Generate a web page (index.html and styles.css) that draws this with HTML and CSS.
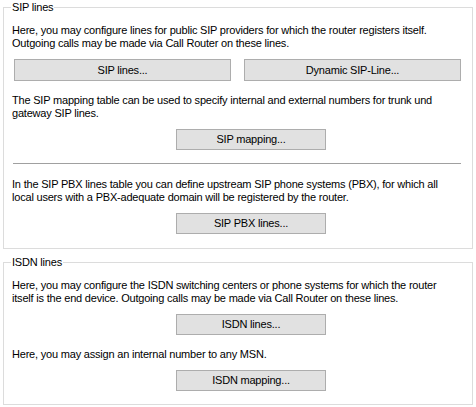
FILE: index.html
```html
<!DOCTYPE html>
<html lang="en">
<head>
    <meta charset="UTF-8">
    <title>Lines</title>
    <link rel="stylesheet" href="styles.css">
</head>
<body>
    <fieldset class="group sip">
        <legend>SIP lines</legend>
        <p class="text first">Here, you may configure lines for public SIP providers for which the router registers itself.<br>Outgoing calls may be made via Call Router on these lines.</p>
        <div class="row pair">
            <button class="btn wide">SIP lines...</button>
            <button class="btn wide">Dynamic SIP-Line...</button>
        </div>
        <p class="text">The SIP mapping table can be used to specify internal and external numbers for trunk und<br>gateway SIP lines.</p>
        <div class="row">
            <button class="btn">SIP mapping...</button>
        </div>
        <hr class="sep">
        <p class="text after-sep">In the SIP PBX lines table you can define upstream SIP phone systems (PBX), for which all<br>local users with a PBX-adequate domain will be registered by the router.</p>
        <div class="row">
            <button class="btn">SIP PBX lines...</button>
        </div>
    </fieldset>

    <fieldset class="group isdn">
        <legend>ISDN lines</legend>
        <p class="text first">Here, you may configure the ISDN switching centers or phone systems for which the router<br>itself is the end device. Outgoing calls may be made via Call Router on these lines.</p>
        <div class="row">
            <button class="btn">ISDN lines...</button>
        </div>
        <p class="text">Here, you may assign an internal number to any MSN.</p>
        <div class="row">
            <button class="btn">ISDN mapping...</button>
        </div>
    </fieldset>
</body>
</html>
```

FILE: styles.css
```css
*{
    margin:0;
    padding:0;
    box-sizing:border-box;
}

body{
    width:476px;
    height:407px;
    background:#fff;
    color:#000;
    font-family:"Liberation Sans", Arial, sans-serif;
    font-size:11px;
    line-height:13px;
    letter-spacing:-0.2px;
    padding-top:1px;
}

.group{
    margin:0 3px;
    border:1px solid #dcdcdc;
    padding:0 9px 0 8px;
}

.group legend{
    padding:0 1px;
    margin-left:-1px;
    line-height:13px;
}

.sip{
    height:248px;
}

.isdn{
    margin-top:7px;
    height:149px;
}

.text{
    margin-top:13px;
    white-space:nowrap;
}

.text.first{
    margin-top:10px;
}

.text.after-sep{
    margin-top:14px;
}

.row{
    display:flex;
    margin-top:9px;
    padding-left:164px;
}

.row.pair{
    padding-left:2px;
    gap:13px;
}

.btn{
    width:150px;
    height:21px;
    background:#e1e1e1;
    border:1px solid #adadad;
    font:inherit;
    letter-spacing:inherit;
    color:#000;
}

.btn.wide{
    width:217px;
    height:22px;
}

.sep{
    border:0;
    border-top:1px solid #a0a0a0;
    margin:13px 0 0 1px;
    width:448px;
}
```
